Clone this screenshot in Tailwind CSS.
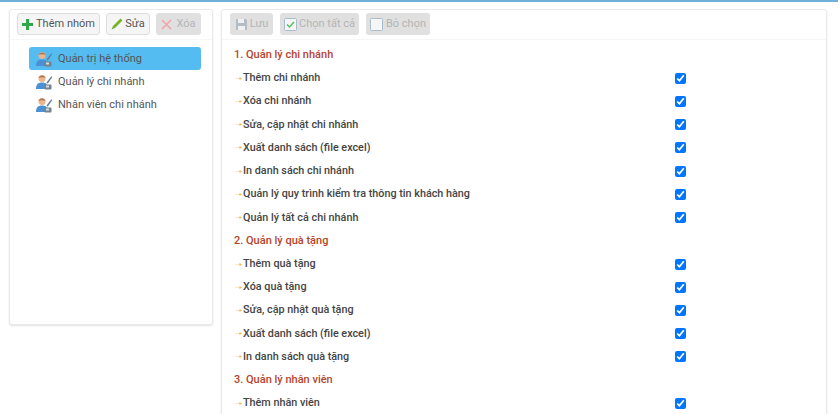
<!DOCTYPE html>
<html><head><meta charset="utf-8"><script src="https://cdn.jsdelivr.net/npm/@tailwindcss/browser@4"></script></head>
<body class="w-[840px] h-[414px] overflow-hidden bg-white font-['Roboto',sans-serif] text-[11px] text-[#333]">
<svg class="hidden"><defs>
<symbol id="user" viewBox="0 0 16 16"><path d="M0 15c0-4.500 2-6.500 6-6.500s6 2 6 6.500z" fill="#4a90d4"/><circle cx="6" cy="4.500" r="3.500" fill="#eeb58a"/><path d="M2.500 4C3 0.500 9 0.500 9.500 4 8 3 4 3 2.500 4z" fill="#a87650"/><path d="M15.500 2L10.500 8.500l1.200 1.200L16 3.500z" fill="#5f7e9c"/><rect x="8.500" y="10.500" width="7" height="5" rx="1" fill="#76828c"/><rect x="10" y="11.500" width="3" height="2" fill="#d5dce2"/></symbol>
<symbol id="arr" viewBox="0 0 9 5"><path d="M1.500 2.500h4.500" stroke="#fde3b8" stroke-width="1"/><path d="M5.500 1l2.500 1.500-2.500 1.500z" fill="#f7b649"/></symbol>
</defs></svg>
<div class="h-[1.500px] mr-[2px] bg-[#6fb1d9]"></div>
<div class="flex items-start gap-2 pl-[9px] pr-[13px] pt-[7.500px]">
 <section class="w-[204px] h-[316px] shrink-0 bg-white rounded-[3px] border border-[#eaeaea] shadow-[0_1px_2px_rgba(0,0,0,0.12)]">
  <div class="h-[30px] flex gap-[6px] pl-[7px] pt-[3px] border-b border-[#f6f6f6]">
   <button class="h-[22px] w-[83px] flex items-center justify-center gap-[3px] rounded-[3px] border border-[#ddd] bg-[#f5f5f5] text-[#555]"><svg width="11" height="11" viewBox="0 0 11 11"><path d="M4 0h3v4h4v3H7v4H4V7H0V4h4z" fill="#2da84a"/></svg>Thêm nhóm</button>
   <button class="h-[22px] w-[44px] flex items-center justify-center gap-[2px] rounded-[3px] border border-[#ddd] bg-[#f5f5f5] text-[#555]"><svg width="12" height="12" viewBox="0 0 12 12"><path d="M9.500 0.500l2 2-7.500 7.500-3.500 1.500 1.500-3.500z" fill="#78b32e"/></svg>Sửa</button>
   <button class="h-[22px] w-[45px] flex items-center justify-center gap-[4px] rounded-[3px] bg-[#e0e0e0] text-[#b5b5b5]"><svg width="11" height="11" viewBox="0 0 11 11"><path d="M1 1l9 9M10 1l-9 9" stroke="#f2a3a3" stroke-width="1.500"/></svg>Xóa</button>
  </div>
  <ul class="pt-[7px] pl-[19px] pr-[11px] text-[#555]">
   <li class="h-[23px] flex items-center gap-[6px] pl-[7px] rounded-[3px] bg-[#54bcf0]"><svg class="w-4 h-4"><use href="#user"/></svg><span class="pt-[2px]">Quản trị hệ thống</span></li>
   <li class="h-[23px] flex items-center gap-[6px] pl-[7px]"><svg class="w-4 h-4"><use href="#user"/></svg><span class="pt-[2px]">Quản lý chi nhánh</span></li>
   <li class="h-[23px] flex items-center gap-[6px] pl-[7px]"><svg class="w-4 h-4"><use href="#user"/></svg><span class="pt-[2px]">Nhân viên chi nhánh</span></li>
  </ul>
 </section>
 <section class="flex-1 h-[500px] bg-white rounded-[3px] border border-[#eaeaea] shadow-[0_1px_2px_rgba(0,0,0,0.12)]">
  <div class="h-[30px] flex gap-[7px] pl-[8px] pt-[3px] border-b border-[#f6f6f6] text-[#b5b5b5]">
   <div class="h-[22px] w-[43px] flex items-center justify-center gap-[2px] rounded-[3px] bg-[#e0e0e0]"><svg width="13" height="13" viewBox="0 0 13 13"><path d="M1 1h10l1 1v10H1z" fill="#b4bcc4"/><path d="M3 1h6v4H3zM3 8h7v4H3z" fill="#eef0f2"/></svg>Lưu</div>
   <div class="h-[22px] w-[79px] flex items-center justify-center gap-[2px] rounded-[3px] bg-[#e0e0e0]"><svg width="13" height="13" viewBox="0 0 13 13"><rect x=".5" y=".5" width="12" height="12" rx="1" fill="#f6f6f6" stroke="#a9bccb"/><path d="M3 6.500l2.500 2.500L10 4" fill="none" stroke="#55c35a" stroke-width="1.500"/></svg>Chọn tất cả</div>
   <div class="h-[22px] w-[64px] flex items-center justify-center gap-[3px] rounded-[3px] bg-[#e0e0e0]"><svg width="13" height="13" viewBox="0 0 13 13"><rect x=".5" y=".5" width="12" height="12" rx="1" fill="#f6f6f6" stroke="#a9bccb"/></svg>Bỏ chọn</div>
  </div>
  <div class="pl-[12px] pt-[3.500px]">
   <h3 class="h-[23.230px] flex items-center font-medium text-[#b5442c]">1. Quản lý chi nhánh</h3>
   <div class="h-[23.230px] flex items-center font-medium text-[10.800px] text-[#444]"><svg class="w-[9px] h-[5px]"><use href="#arr"/></svg><span class="w-[432px]">Thêm chi nhánh</span><input class="w-[11px] h-[11px]" type="checkbox" checked></div>
   <div class="h-[23.230px] flex items-center font-medium text-[10.800px] text-[#444]"><svg class="w-[9px] h-[5px]"><use href="#arr"/></svg><span class="w-[432px]">Xóa chi nhánh</span><input class="w-[11px] h-[11px]" type="checkbox" checked></div>
   <div class="h-[23.230px] flex items-center font-medium text-[10.800px] text-[#444]"><svg class="w-[9px] h-[5px]"><use href="#arr"/></svg><span class="w-[432px]">Sửa, cập nhật chi nhánh</span><input class="w-[11px] h-[11px]" type="checkbox" checked></div>
   <div class="h-[23.230px] flex items-center font-medium text-[10.800px] text-[#444]"><svg class="w-[9px] h-[5px]"><use href="#arr"/></svg><span class="w-[432px]">Xuất danh sách (file excel)</span><input class="w-[11px] h-[11px]" type="checkbox" checked></div>
   <div class="h-[23.230px] flex items-center font-medium text-[10.800px] text-[#444]"><svg class="w-[9px] h-[5px]"><use href="#arr"/></svg><span class="w-[432px]">In danh sách chi nhánh</span><input class="w-[11px] h-[11px]" type="checkbox" checked></div>
   <div class="h-[23.230px] flex items-center font-medium text-[10.800px] text-[#444]"><svg class="w-[9px] h-[5px]"><use href="#arr"/></svg><span class="w-[432px]">Quản lý quy trình kiểm tra thông tin khách hàng</span><input class="w-[11px] h-[11px]" type="checkbox" checked></div>
   <div class="h-[23.230px] flex items-center font-medium text-[10.800px] text-[#444]"><svg class="w-[9px] h-[5px]"><use href="#arr"/></svg><span class="w-[432px]">Quản lý tất cả chi nhánh</span><input class="w-[11px] h-[11px]" type="checkbox" checked></div>
   <h3 class="h-[23.230px] flex items-center font-medium text-[#b5442c]">2. Quản lý quà tặng</h3>
   <div class="h-[23.230px] flex items-center font-medium text-[10.800px] text-[#444]"><svg class="w-[9px] h-[5px]"><use href="#arr"/></svg><span class="w-[432px]">Thêm quà tặng</span><input class="w-[11px] h-[11px]" type="checkbox" checked></div>
   <div class="h-[23.230px] flex items-center font-medium text-[10.800px] text-[#444]"><svg class="w-[9px] h-[5px]"><use href="#arr"/></svg><span class="w-[432px]">Xóa quà tặng</span><input class="w-[11px] h-[11px]" type="checkbox" checked></div>
   <div class="h-[23.230px] flex items-center font-medium text-[10.800px] text-[#444]"><svg class="w-[9px] h-[5px]"><use href="#arr"/></svg><span class="w-[432px]">Sửa, cập nhật quà tặng</span><input class="w-[11px] h-[11px]" type="checkbox" checked></div>
   <div class="h-[23.230px] flex items-center font-medium text-[10.800px] text-[#444]"><svg class="w-[9px] h-[5px]"><use href="#arr"/></svg><span class="w-[432px]">Xuất danh sách (file excel)</span><input class="w-[11px] h-[11px]" type="checkbox" checked></div>
   <div class="h-[23.230px] flex items-center font-medium text-[10.800px] text-[#444]"><svg class="w-[9px] h-[5px]"><use href="#arr"/></svg><span class="w-[432px]">In danh sách quà tặng</span><input class="w-[11px] h-[11px]" type="checkbox" checked></div>
   <h3 class="h-[23.230px] flex items-center font-medium text-[#b5442c]">3. Quản lý nhân viên</h3>
   <div class="h-[23.230px] flex items-center font-medium text-[10.800px] text-[#444]"><svg class="w-[9px] h-[5px]"><use href="#arr"/></svg><span class="w-[432px]">Thêm nhân viên</span><input class="w-[11px] h-[11px]" type="checkbox" checked></div>
  </div>
 </section>
</div>
</body></html>
